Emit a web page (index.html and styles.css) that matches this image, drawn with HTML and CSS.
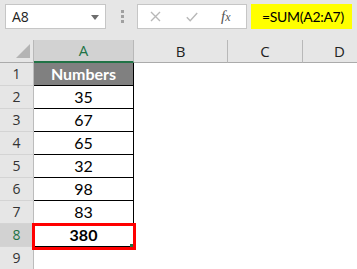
FILE: index.html
```html
<!DOCTYPE html>
<html>
<head>
<meta charset="utf-8">
<link rel="stylesheet" href="styles.css">
</head>
<body>
<div class="topbar">
  <div class="namebox">
    <span class="nb-text">A8</span>
    <svg class="nb-arrow" width="8" height="5" viewBox="0 0 8 5"><path d="M0 0H8L4 5Z" fill="#6d6d6d"/></svg>
  </div>
  <div class="dots"><i></i><i></i><i></i></div>
  <div class="fxbox">
    <svg class="ic-x" width="11" height="11" viewBox="0 0 11 11"><path d="M1 1L10 10M10 1L1 10" stroke="#b8b8b8" stroke-width="1.4" fill="none"/></svg>
    <svg class="ic-check" width="12" height="10" viewBox="0 0 12 10"><path d="M0.8 5.2L4.2 8.8L11.2 1" stroke="#b8b8b8" stroke-width="1.4" fill="none"/></svg>
    <span class="fx">f<span class="fx-x">x</span></span>
  </div>
  <div class="formula">=SUM(A2:A7)</div>
</div>
<div class="sheet">
  <div class="corner"><span class="tri"></span></div>
  <div class="colhead colhead-active">A</div>
  <div class="colhead">B</div>
  <div class="colhead">C</div>
  <div class="colhead">D</div>

  <div class="rowhead">1</div><div class="cell a title">Numbers</div><div class="cell"></div><div class="cell"></div><div class="cell"></div>
  <div class="rowhead">2</div><div class="cell a">35</div><div class="cell"></div><div class="cell"></div><div class="cell"></div>
  <div class="rowhead">3</div><div class="cell a">67</div><div class="cell"></div><div class="cell"></div><div class="cell"></div>
  <div class="rowhead">4</div><div class="cell a">65</div><div class="cell"></div><div class="cell"></div><div class="cell"></div>
  <div class="rowhead">5</div><div class="cell a">32</div><div class="cell"></div><div class="cell"></div><div class="cell"></div>
  <div class="rowhead">6</div><div class="cell a">98</div><div class="cell"></div><div class="cell"></div><div class="cell"></div>
  <div class="rowhead">7</div><div class="cell a">83</div><div class="cell"></div><div class="cell"></div><div class="cell"></div>
  <div class="rowhead rowhead-active">8</div><div class="cell a total">380<span class="sel"><span class="handle"></span></span></div><div class="cell"></div><div class="cell"></div><div class="cell"></div>
  <div class="rowhead">9</div><div class="cell"></div><div class="cell"></div><div class="cell"></div><div class="cell"></div>
</div>
</body>
</html>
```

FILE: styles.css
```css
html, body {
  margin: 0;
  padding: 0;
  background: #ffffff;
  overflow: hidden;
}
body {
  width: 357px;
  height: 269px;
}
.topbar {
  box-sizing: border-box;
  height: 40px;
  background: #e6e6e6;
  display: flex;
  align-items: flex-start;
  padding: 4px 0 0 5px;
}
.namebox {
  box-sizing: border-box;
  width: 101px;
  height: 25px;
  background: #fff;
  border: 1px solid #c6c6c6;
  display: flex;
  align-items: center;
  justify-content: space-between;
  padding: 0 6px 0 6px;
}
.nb-text {
  font-family: "Open Sans", "Noto Sans", sans-serif;
  font-size: 14px;
  color: #222;
}
.nb-arrow {
  margin-top: 1px;
}
.dots {
  height: 25px;
  width: 3px;
  margin-left: 15px;
  display: flex;
  flex-direction: column;
  justify-content: center;
  gap: 2px;
}
.dots i {
  display: block;
  width: 3px;
  height: 3px;
  background: #a0a0a0;
}
.fxbox {
  box-sizing: border-box;
  width: 110px;
  height: 25px;
  margin-left: 13px;
  background: #fff;
  border: 1px solid #c6c6c6;
  display: flex;
  align-items: center;
  padding-left: 12px;
}
.ic-x {
  margin-right: 25px;
}
.ic-check {
  margin-right: 23px;
}
.fx {
  font-family: "Liberation Serif", serif;
  font-style: italic;
  font-size: 15px;
  color: #555;
}
.fx-x {
  font-size: 12px;
}
.formula {
  box-sizing: border-box;
  width: 101px;
  height: 25px;
  margin-left: 4px;
  background: #ffff00;
  display: flex;
  align-items: center;
  padding-left: 11px;
  font-family: Lato, "Liberation Sans", sans-serif;
  font-size: 14px;
  letter-spacing: -0.3px;
  color: #000;
  white-space: nowrap;
}
.sheet {
  display: grid;
  grid-template-columns: 34px 100px 94px 75px 74px;
  grid-template-rows: 23px repeat(9, 23px);
}
.corner, .colhead, .rowhead, .cell {
  box-sizing: border-box;
}
.corner {
  background: #e6e6e6;
  border-right: 1px solid #b8b8b8;
  border-bottom: 1px solid #ababab;
  display: flex;
  justify-content: flex-end;
  align-items: flex-end;
  padding: 0 3px 4px 0;
}
.tri {
  width: 0;
  height: 0;
  border-left: 14px solid transparent;
  border-bottom: 14px solid #b4b4b4;
}
.colhead {
  background: #e6e6e6;
  border-right: 1px solid #b8b8b8;
  border-bottom: 1px solid #ababab;
  display: flex;
  align-items: center;
  justify-content: center;
  font-family: "Open Sans", "Noto Sans", sans-serif;
  font-size: 15px;
  color: #222;
  padding-bottom: 1px;
}
.colhead-active {
  background: #d2d2d2;
  border-bottom: 2px solid #217346;
  color: #217346;
}
.rowhead {
  background: #e6e6e6;
  border-right: 1px solid #bcbcbc;
  border-bottom: 1px solid #d4d4d4;
  display: flex;
  align-items: center;
  justify-content: center;
  font-family: "Open Sans", "Noto Sans", sans-serif;
  font-size: 14px;
  color: #333;
  padding-bottom: 1px;
}
.rowhead-active {
  background: #d2d2d2;
  color: #217346;
}
.cell {
  background: #fff;
  font-family: Lato, "Liberation Sans", sans-serif;
  font-size: 16px;
  color: #000;
  display: flex;
  align-items: center;
  justify-content: center;
}
.cell.a {
  border-right: 1px solid #000;
  border-bottom: 1px solid #000;
  padding-bottom: 1px;
}
.cell.title {
  background: #808080;
  color: #fff;
  font-weight: bold;
}
.cell.total {
  font-weight: bold;
  position: relative;
}
.sel {
  position: absolute;
  left: -2px;
  top: -1px;
  width: 104px;
  height: 27px;
  box-sizing: border-box;
  border: 3px solid #ff0000;
}
.handle {
  position: absolute;
  right: 0;
  bottom: 0;
  width: 3px;
  height: 3px;
  background: #217346;
}
```
